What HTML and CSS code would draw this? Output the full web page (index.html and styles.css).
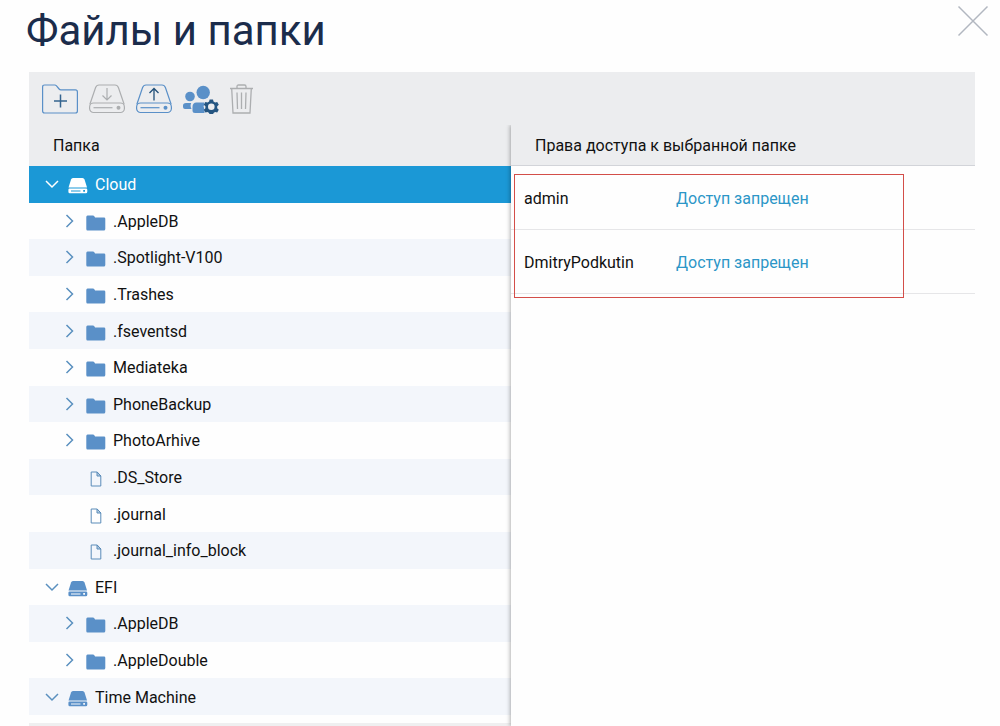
FILE: index.html
```html
<!DOCTYPE html>
<html lang="ru">
<head>
<meta charset="utf-8">
<meta name="viewport" content="width=device-width, initial-scale=1">
<title>Файлы и папки</title>
<link rel="stylesheet" href="styles.css">
</head>
<body>
<svg class="sprite" aria-hidden="true">
  <symbol id="down" viewBox="0 0 14 14"><path d="M1 4l6 6 6-6" fill="none" stroke="currentColor" stroke-width="1.5"/></symbol>
  <symbol id="right" viewBox="0 0 14 14"><path d="M3.500 1l6 6-6 6" fill="none" stroke="currentColor" stroke-width="1.5"/></symbol>
  <symbol id="folder" viewBox="0 0 20 16"><path d="M1.500 .5H7q.8 0 1.300.8l.8 1.200H18q1.300 0 1.300 1.300V14q0 1.500-1.500 1.500H1.500Q.3 15.500.3 14V2Q.3.500 1.500.5z" fill="currentColor"/></symbol>
  <symbol id="disk" viewBox="0 0 20 18"><path d="M5 1h9.500q1.500 0 2 1.500l2.500 8H.5l2.500-8Q3.500 1 5 1z" fill="currentColor"/><path fill-rule="evenodd" d="M1.500 11.500h16.500q1.300 0 1.300 1.300v2q0 1.500-1.500 1.500h-16Q.4 16.300.4 14.800v-2q0-1.300 1.100-1.300zM3 13.500v1h9.500v-1zm12.200-.4v1.700h1.800v-1.700z" fill="currentColor"/></symbol>
  <symbol id="file" viewBox="0 0 12 16"><path d="M1.200 1h6l3.600 4v10H1.200z" fill="none" stroke="currentColor"/><path d="M7 1v4h4z" fill="currentColor" fill-opacity=".4" stroke="currentColor"/></symbol>
  <symbol id="drive" viewBox="0 0 36 30"><g fill="none" stroke="currentColor" stroke-width="1.200"><path d="M.8 20.500L6.600 3.500Q7.500 1 10 1h16q2.500 0 3.400 2.500l5.800 17"/><rect x=".6" y="19" width="34.800" height="9.500" rx="4"/><path d="M4.500 23.700h19"/></g><circle cx="29.500" cy="23.700" r="2" fill="currentColor"/></symbol>
</svg>

<main class="window">
  <header class="titlebar">
    <h1 class="title">Файлы и папки</h1>
    <button class="close" type="button" aria-label="Закрыть">
      <svg width="32" height="32" viewBox="0 0 32 32"><path d="M1.500 1.500l29 29m0-29l-29 29" fill="none" stroke="currentColor" stroke-width="1.500"/></svg>
    </button>
  </header>

  <section class="manager">
    <div class="toolbar" role="toolbar" aria-label="Действия">
      <button class="tool" type="button" aria-label="Новая папка">
        <svg width="36" height="30" viewBox="0 0 36 30"><path d="M2.600 1h10.200q1 0 1.700.8l2.600 3.200q.7.900 1.800.900h14.500q2 0 2 2V27q0 2-2 2H2.600q-2 0-2-2V3q0-2 2-2z" fill="none" stroke="currentColor" stroke-width="1.200"/><path d="M18.500 10.500v13M12 17h13" stroke="#34648f" stroke-width="1.500"/></svg>
      </button>
      <button class="tool" type="button" aria-label="Скачать" disabled>
        <svg width="36" height="30"><use href="#drive"/><path d="M18 4v12M13.500 11.500L18 16l4.500-4.500" fill="none" stroke="currentColor" stroke-width="1.200"/></svg>
      </button>
      <button class="tool" type="button" aria-label="Загрузить">
        <svg width="36" height="30"><use href="#drive"/><path d="M18 16.500v-12M13.500 9L18 4.500 22.500 9" fill="none" stroke="#214f78" stroke-width="1.300"/></svg>
      </button>
      <button class="tool" type="button" aria-label="Права пользователей">
        <svg width="36" height="30" viewBox="0 0 36 30"><g fill="currentColor"><circle cx="7" cy="12.500" r="4.800"/><circle cx="20.200" cy="8.500" r="6.700"/><path d="M3 19h5.200q-1 2-.5 4l.8 2H2Q0 25 0 23v-1.500Q0 19 3 19zM13.500 18.500h8v10.500H12q-2.500 0-2.500-2.500V23q0-4.500 4-4.500z"/></g><circle cx="28.300" cy="22.300" r="7.600" fill="#ecedef"/><path fill="#245581" fill-rule="evenodd" d="M26.600 15.500h3.400l.5 2.100 1.600.9 2.100-.6 1.600 2.800-1.600 1.600v1.900l1.600 1.600-1.600 2.800-2.100-.6-1.600.9-.5 2.100h-3.400l-.5-2.100-1.600-.9-2.100.6-1.600-2.800 1.600-1.600v-1.900l-1.600-1.600 1.600-2.800 2.100.6 1.600-.9zM28.300 19.500a3.300 3.300 0 1 0 0 6.600 3.300 3.300 0 0 0 0-6.600z"/></svg>
      </button>
      <button class="tool" type="button" aria-label="Удалить" disabled>
        <svg width="24" height="30" viewBox="0 0 24 30"><path d="M0 4.500h23M7 4.500V2.500Q7 1 8.500 1h6Q16 1 16 2.500v2M1.700 4.500l1.300 24.500h17l1.300-24.500M7 8.500l.5 16.500M11.500 8.500V25M16 8.500L15.500 25" fill="none" stroke="currentColor" stroke-width="1.300"/></svg>
      </button>
    </div>

    <div class="panes">
      <section class="folders">
        <h2 class="heading">Папка</h2>
        <ul class="tree" role="tree" aria-label="Папка">
          <li class="row selected" role="treeitem" aria-level="1" aria-expanded="true" aria-selected="true"><svg class="chevron"><use href="#down"/></svg><svg class="disk"><use href="#disk"/></svg>Cloud</li>
          <li class="row child" role="treeitem" aria-level="2" aria-expanded="false"><svg class="chevron"><use href="#right"/></svg><svg class="folder"><use href="#folder"/></svg>.AppleDB</li>
          <li class="row child" role="treeitem" aria-level="2" aria-expanded="false"><svg class="chevron"><use href="#right"/></svg><svg class="folder"><use href="#folder"/></svg>.Spotlight-V100</li>
          <li class="row child" role="treeitem" aria-level="2" aria-expanded="false"><svg class="chevron"><use href="#right"/></svg><svg class="folder"><use href="#folder"/></svg>.Trashes</li>
          <li class="row child" role="treeitem" aria-level="2" aria-expanded="false"><svg class="chevron"><use href="#right"/></svg><svg class="folder"><use href="#folder"/></svg>.fseventsd</li>
          <li class="row child" role="treeitem" aria-level="2" aria-expanded="false"><svg class="chevron"><use href="#right"/></svg><svg class="folder"><use href="#folder"/></svg>Mediateka</li>
          <li class="row child" role="treeitem" aria-level="2" aria-expanded="false"><svg class="chevron"><use href="#right"/></svg><svg class="folder"><use href="#folder"/></svg>PhoneBackup</li>
          <li class="row child" role="treeitem" aria-level="2" aria-expanded="false"><svg class="chevron"><use href="#right"/></svg><svg class="folder"><use href="#folder"/></svg>PhotoArhive</li>
          <li class="row leaf" role="treeitem" aria-level="2"><svg class="file"><use href="#file"/></svg>.DS_Store</li>
          <li class="row leaf" role="treeitem" aria-level="2"><svg class="file"><use href="#file"/></svg>.journal</li>
          <li class="row leaf" role="treeitem" aria-level="2"><svg class="file"><use href="#file"/></svg>.journal_info_block</li>
          <li class="row" role="treeitem" aria-level="1" aria-expanded="true"><svg class="chevron"><use href="#down"/></svg><svg class="disk"><use href="#disk"/></svg>EFI</li>
          <li class="row child" role="treeitem" aria-level="2" aria-expanded="false"><svg class="chevron"><use href="#right"/></svg><svg class="folder"><use href="#folder"/></svg>.AppleDB</li>
          <li class="row child" role="treeitem" aria-level="2" aria-expanded="false"><svg class="chevron"><use href="#right"/></svg><svg class="folder"><use href="#folder"/></svg>.AppleDouble</li>
          <li class="row" role="treeitem" aria-level="1" aria-expanded="true"><svg class="chevron"><use href="#down"/></svg><svg class="disk"><use href="#disk"/></svg>Time Machine</li>
        </ul>
        <div class="tree-end"></div>
      </section>

      <section class="access">
        <h2 class="heading access-heading" id="access-title">Права доступа к выбранной папке</h2>
        <div class="access-body">
          <table class="users" aria-labelledby="access-title">
            <tbody>
              <tr><th class="user" scope="row">admin</th><td><button class="permission" type="button">Доступ запрещен</button></td></tr>
              <tr><th class="user" scope="row">DmitryPodkutin</th><td><button class="permission" type="button">Доступ запрещен</button></td></tr>
            </tbody>
          </table>
          <div class="highlight"></div>
        </div>
      </section>
    </div>
  </section>
</main>
</body>
</html>
```

FILE: styles.css
```css
* {
  box-sizing: border-box;
}

body {
  margin: 0;
  background: #fefefe;
  color: #111;
  font: 16px/20px Roboto, "Liberation Sans", sans-serif;
}

svg {
  display: block;
  flex: none;
}

button {
  padding: 0;
  border: 0;
  background: none;
  font: inherit;
}

.sprite {
  display: none;
}

.window {
  display: flex;
  flex-direction: column;
  min-height: 100vh;
}

.titlebar {
  display: flex;
  justify-content: space-between;
  align-items: flex-start;
  height: 72px;
  padding: 5px 11px 0 26px;
}

.title {
  margin: 0;
  color: #1b2c4b;
  font-size: 42px;
  font-weight: 400;
  line-height: 52px;
}

.close {
  color: #b2b7c0;
}

.manager {
  display: flex;
  flex: 1;
  flex-direction: column;
  margin: 0 25px 0 29px;
}

.toolbar {
  display: flex;
  gap: 11px;
  height: 53px;
  padding: 12px 13px;
  background: #ecedef;
}

.tool {
  height: 30px;
  color: #5a90c8;
}

.tool:disabled {
  color: #acaeb0;
}

.panes {
  display: grid;
  flex: 1;
  grid-template-columns: 482fr 464fr;
}

.folders {
  display: flex;
  flex-direction: column;
}

.heading {
  height: 41px;
  margin: 0;
  padding: 11px 24px 0;
  background: #ecedef;
  font-size: 16px;
  font-weight: 400;
  line-height: 20px;
}

.tree {
  display: flex;
  flex: 1;
  flex-direction: column;
  margin: 0;
  padding: 0;
  list-style: none;
}

.row {
  display: flex;
  flex: 1;
  align-items: center;
  min-height: 36px;
  padding-top: 2px;
  padding-left: 16px;
}

.row:nth-child(odd) {
  background: #f3f6fb;
}

.row.selected {
  background: #1b98d6;
  color: #fff;
}

.row.child {
  padding-left: 34px;
}

.row.leaf {
  padding-left: 61px;
}

.chevron {
  width: 14px;
  height: 14px;
  margin: 0 9px 2px 0;
  color: #5a90bf;
}

.disk {
  width: 20px;
  height: 18px;
  margin: 2px 7px 0 0;
  color: #5a90c8;
}

.folder {
  width: 20px;
  height: 16px;
  margin: 2px 7px 0 0;
  color: #5a90c8;
}

.file {
  width: 12px;
  height: 16px;
  margin: 2px 11px 0 0;
  color: #5a8cb9;
}

.selected .chevron,
.selected .disk {
  color: #fff;
}

.tree-end {
  height: 11px;
  border-bottom: 3px solid #efeff0;
}

.access {
  background: #fefefe;
  box-shadow: -1px 0 4px rgba(0, 0, 0, 0.3);
  clip-path: inset(0 0 0 -6px);
}

.access-heading {
  border-bottom: 1px solid #d2d4d9;
}

.access-body {
  position: relative;
}

.users {
  width: 100%;
  border-spacing: 0;
  table-layout: fixed;
}

.users tr {
  height: 64px;
}

.users th,
.users td {
  padding: 2px 0 0;
  border-bottom: 1px solid #e6e6e8;
}

.users .user {
  width: 165px;
  padding-left: 13px;
  font-weight: 400;
  text-align: left;
}

.permission {
  color: #2c96c7;
}

.highlight {
  position: absolute;
  inset: 8px 71px -4px 3px;
  border: 1px solid #d34e49;
  pointer-events: none;
}
```
